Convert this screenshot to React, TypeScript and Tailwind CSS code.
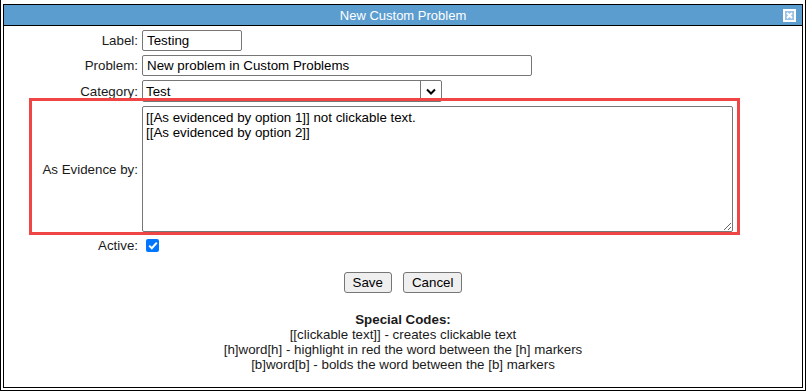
import { useState } from "react";

const Row = ({ label, children }: { label: string; children: React.ReactNode }) => (
  <div className="flex items-center gap-[4px]">
    <label className="w-[134px] shrink-0 text-right text-[#1a1a1a]">{label}</label>
    {children}
  </div>
);

const App = () => {
  const [active, setActive] = useState(true);

  return (
    <div
      className="relative h-[391px] w-[806px] border-x border-b border-black bg-white px-[2px] pt-[4px] pb-[2px] text-[13.33px] leading-[15px] text-black"
      style={{ fontFamily: '"Liberation Sans", Arial, sans-serif' }}
    >
      <div className="flex h-full flex-col border border-black">
        {/* title bar */}
        <div className="relative flex h-[21px] shrink-0 items-center justify-center border-b border-black bg-[#5c9dcf] text-white">
          <span className="text-[13px]">New Custom Problem</span>
          <button className="absolute top-[4px] right-[6px] flex h-[13px] w-[13px] items-center justify-center border-2 border-white bg-[#9cc3e4]">
            <svg width="7" height="7" viewBox="0 0 7 7">
              <path d="M1 1 L6 6 M6 1 L1 6" stroke="white" strokeWidth="2" />
            </svg>
          </button>
        </div>

        <div className="flex flex-col gap-[4px] pt-[4px]">
          <Row label="Label:">
            <input
              readOnly
              value="Testing"
              className="h-[21px] w-[100px] rounded-[2px] border border-[#767676] px-[4px] outline-none"
            />
          </Row>
          <Row label="Problem:">
            <input
              readOnly
              value="New problem in Custom Problems"
              className="h-[21px] w-[390px] rounded-[2px] border border-[#767676] px-[4px] outline-none"
            />
          </Row>
          <Row label="Category:">
            <div className="flex h-[22px] w-[300px] items-stretch rounded-[2px] border border-[#767676]">
              <span className="flex flex-1 items-center px-[3px]">Test</span>
              <span className="flex w-[21px] items-center justify-center border-l border-[#767676]">
                <svg width="10" height="7" viewBox="0 0 10 7">
                  <path d="M1 1.5 L5 5.5 L9 1.5" fill="none" stroke="black" strokeWidth="2" />
                </svg>
              </span>
            </div>
          </Row>
          <Row label="As Evidence by:">
            <textarea
              readOnly
              defaultValue={"[[As evidenced by option 1]] not clickable text.\n[[As evidenced by option 2]]"}
              className="h-[126px] w-[591px] rounded-[2px] border border-[#767676] px-[3px] pt-[3px] leading-[15px] outline-none"
            />
          </Row>
          <div className="flex h-[19px] items-center gap-[8px]">
            <label className="w-[134px] shrink-0 text-right text-[#1a1a1a]">Active:</label>
            <button
              onClick={() => setActive(!active)}
              className="flex h-[13px] w-[13px] items-center justify-center rounded-[2px] bg-[#0075ff]"
            >
              {active && (
                <svg width="10" height="9" viewBox="0 0 10 9">
                  <path d="M1.2 4.6 L3.8 7.2 L8.8 1.6" fill="none" stroke="white" strokeWidth="2" />
                </svg>
              )}
            </button>
          </div>
        </div>

        <div className="mt-[17px] flex justify-center gap-[11px]">
          <button className="h-[21px] rounded-[3px] border border-[#767676] bg-[#efefef] px-[8px]">Save</button>
          <button className="h-[21px] rounded-[3px] border border-[#767676] bg-[#efefef] px-[8px]">Cancel</button>
        </div>

        <div className="mt-[19px] flex flex-col items-center text-[#1a1a1a]">
          <span className="font-bold">Special Codes:</span>
          <span>[[clickable text]] - creates clickable text</span>
          <span>[h]word[h] - highlight in red the word between the [h] markers</span>
          <span>[b]word[b] - bolds the word between the [b] markers</span>
        </div>
      </div>

      {/* annotation highlight */}
      <div className="pointer-events-none absolute top-[98px] left-[28px] h-[137px] w-[711px] border-[3px] border-[#f04545]" />
    </div>
  );
};

export default App;
